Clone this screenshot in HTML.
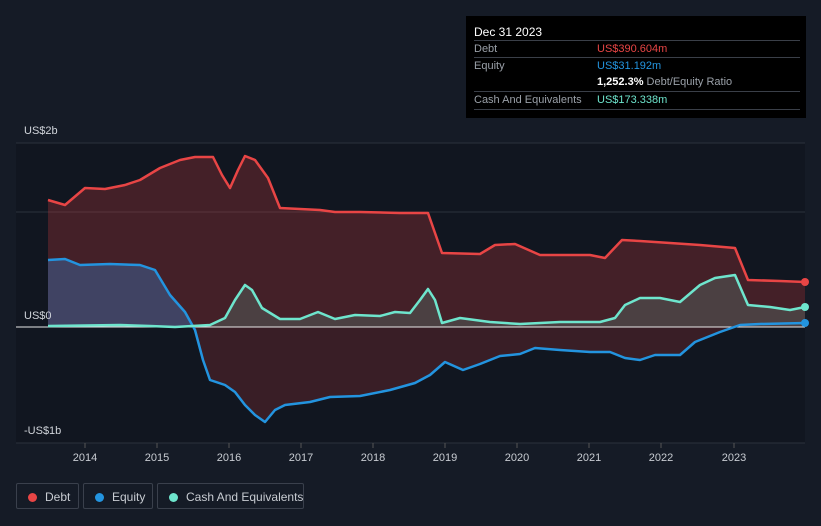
<!DOCTYPE html>
<html><head><meta charset="utf-8"><style>
body{margin:0;width:821px;height:526px;background:#151b26;font-family:"Liberation Sans",sans-serif;overflow:hidden;position:relative}
.tip{position:absolute;left:466px;top:16px;width:340px;height:102px;background:#000;color:#fff;font-size:11px}
.tip .r{position:absolute;left:8px;width:326px;border-top:1px solid #3a3f48;height:17px;line-height:17px;color:#9aa0a8}
.tip .v{position:absolute;left:123px}
.leg{position:absolute;top:483px;height:26px;border:1px solid #3a404c;border-radius:2px;color:#c8ccd2;font-size:12px;line-height:26px;box-sizing:border-box;white-space:nowrap}
.leg i{position:absolute;left:11px;top:9px;width:9px;height:9px;border-radius:50%}
.leg span{position:absolute;left:28px;top:0}
.ax{position:absolute;color:#d0d4da;font-size:11px}
</style></head><body>
<svg width="821" height="526" style="position:absolute;left:0;top:0">
<rect x="16" y="143" width="789" height="300" fill="#111620"/>
<line x1="16" y1="143" x2="805" y2="143" stroke="#2c323c"/>
<line x1="16" y1="212" x2="805" y2="212" stroke="#2c323c"/>
<line x1="16" y1="443" x2="805" y2="443" stroke="#2c323c"/>
<polygon fill="rgba(200,60,60,0.28)" points="48,327 48,200 65,205 85,188 105,189 125,185 140,180 160,168 180,160 195,157 213,157 222,175 230,188 238,170 245,156 255,160 268,178 280,208 300,209 320,210 335,212 360,212 400,213 428,213 442,253 480,254 495,245 515,244 540,255 590,255 605,258 622,240 640,241 700,245 735,248 748,280 780,281 805,282 805,327"/>
<polygon fill="rgba(200,60,60,0.22)" points="195,327 203,360 210,380 225,385 235,392 245,405 255,415 265,422 275,410 285,405 310,402 330,397 360,396 390,390 415,383 430,375 445,362 463,370 480,364 500,356 520,354 535,348 560,350 590,352 610,352 625,358 640,360 655,355 680,355 695,342 720,332 740,325 740,327"/>
<polygon fill="rgba(60,110,170,0.45)" points="48,327 48,260 65,259 80,265 110,264 140,265 155,270 170,295 185,312 195,327"/>
<polygon fill="rgba(110,210,190,0.18)" points="48,327 48,326 120,325 150,326 175,327 210,325 225,318 235,300 245,285 252,290 262,308 280,319 300,319 318,312 335,319 355,315 380,316 395,312 410,313 420,300 428,289 435,300 442,323 460,318 490,322 520,324 560,322 600,322 615,318 625,305 640,298 660,298 680,302 700,285 715,278 735,275 748,305 770,307 790,310 805,307 805,327"/>
<line x1="16" y1="327" x2="805" y2="327" stroke="#e8e8e8" stroke-width="1"/>
<polyline fill="none" stroke="#e84545" stroke-width="2.5" stroke-linejoin="round" points="48,200 65,205 85,188 105,189 125,185 140,180 160,168 180,160 195,157 213,157 222,175 230,188 238,170 245,156 255,160 268,178 280,208 300,209 320,210 335,212 360,212 400,213 428,213 442,253 480,254 495,245 515,244 540,255 590,255 605,258 622,240 640,241 700,245 735,248 748,280 780,281 805,282"/>
<polyline fill="none" stroke="#2394df" stroke-width="2.5" stroke-linejoin="round" points="48,260 65,259 80,265 110,264 140,265 155,270 170,295 185,312 195,330 203,360 210,380 225,385 235,392 245,405 255,415 265,422 275,410 285,405 310,402 330,397 360,396 390,390 415,383 430,375 445,362 463,370 480,364 500,356 520,354 535,348 560,350 590,352 610,352 625,358 640,360 655,355 680,355 695,342 720,332 740,325 760,324 805,323"/>
<polyline fill="none" stroke="#6ee5cd" stroke-width="2.5" stroke-linejoin="round" points="48,326 120,325 150,326 175,327 210,325 225,318 235,300 245,285 252,290 262,308 280,319 300,319 318,312 335,319 355,315 380,316 395,312 410,313 420,300 428,289 435,300 442,323 460,318 490,322 520,324 560,322 600,322 615,318 625,305 640,298 660,298 680,302 700,285 715,278 735,275 748,305 770,307 790,310 805,307"/>
<circle cx="805" cy="282" r="4" fill="#e84545"/><circle cx="805" cy="323" r="4" fill="#2394df"/><circle cx="805" cy="307" r="4" fill="#6ee5cd"/>
<g fill="#c8ccd2" font-size="11" font-family="Liberation Sans" text-anchor="middle">
<text x="85" y="461">2014</text><text x="157" y="461">2015</text><text x="229" y="461">2016</text><text x="301" y="461">2017</text><text x="373" y="461">2018</text><text x="445" y="461">2019</text><text x="517" y="461">2020</text><text x="589" y="461">2021</text><text x="661" y="461">2022</text><text x="734" y="461">2023</text></g>
<g stroke="#555" ><line x1="85" y1="443" x2="85" y2="448"/><line x1="157" y1="443" x2="157" y2="448"/><line x1="229" y1="443" x2="229" y2="448"/><line x1="301" y1="443" x2="301" y2="448"/><line x1="373" y1="443" x2="373" y2="448"/><line x1="445" y1="443" x2="445" y2="448"/><line x1="517" y1="443" x2="517" y2="448"/><line x1="589" y1="443" x2="589" y2="448"/><line x1="661" y1="443" x2="661" y2="448"/><line x1="734" y1="443" x2="734" y2="448"/></g>
</svg>
<div class="ax" style="left:24px;top:125px">US$2b</div>
<div class="ax" style="left:24px;top:310px">US$0</div>
<div class="ax" style="left:24px;top:425px">-US$1b</div>
<div class="tip">
<div style="position:absolute;left:8px;top:9px;font-size:12px">Dec 31 2023</div>
<div class="r" style="top:24px">Debt<span class="v" style="color:#e84545">US$390.604m</span></div>
<div class="r" style="top:41px">Equity<span class="v" style="color:#2394df">US$31.192m</span></div>
<div class="r" style="top:58px;border-top:none"><span class="v" style="color:#fff;font-weight:bold">1,252.3% <span style="color:#9aa0a8;font-weight:normal">Debt/Equity Ratio</span></span></div>
<div class="r" style="top:75px;border-bottom:1px solid #3a3f48">Cash And Equivalents<span class="v" style="color:#6ee5cd">US$173.338m</span></div>
</div>
<div class="leg" style="left:16px;width:63px"><i style="background:#e84545"></i><span>Debt</span></div>
<div class="leg" style="left:83px;width:70px"><i style="background:#2394df"></i><span>Equity</span></div>
<div class="leg" style="left:157px;width:147px"><i style="background:#6ee5cd"></i><span>Cash And Equivalents</span></div>
</body></html>
